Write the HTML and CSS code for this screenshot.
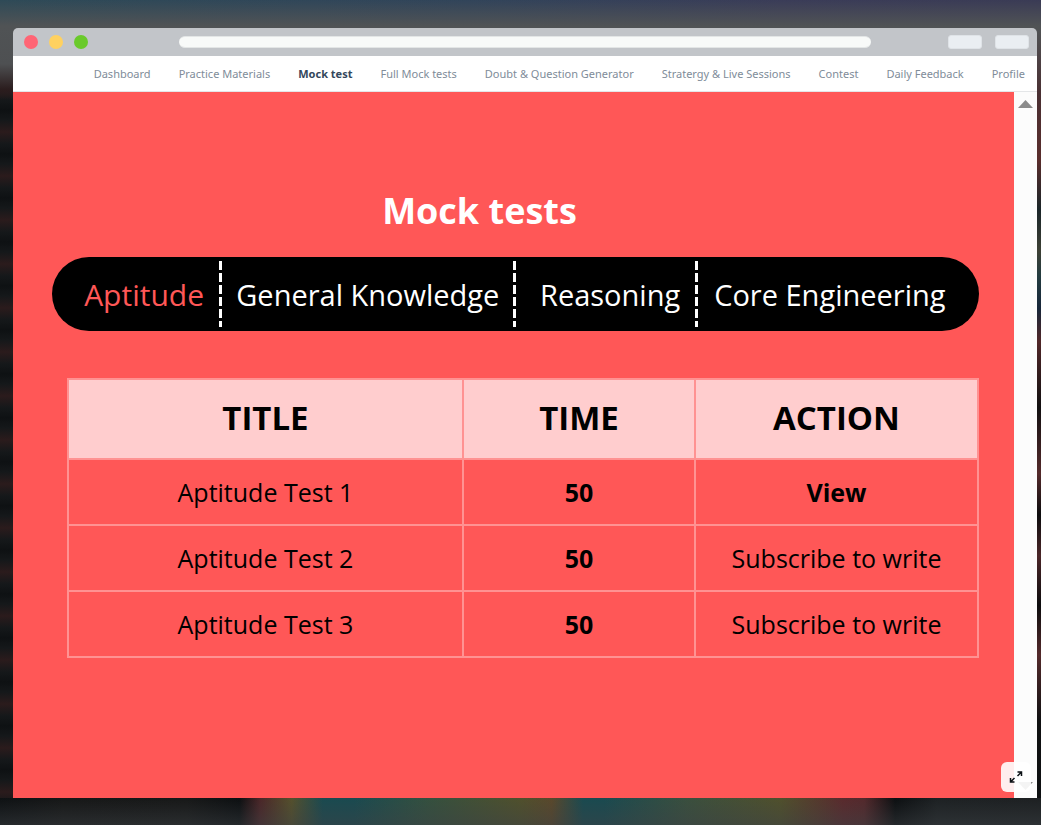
FILE: index.html
```html
<!DOCTYPE html>
<html lang="en">
<head>
<meta charset="utf-8">
<title>Mock tests</title>
<link rel="stylesheet" href="styles.css">
</head>
<body>
<div class="window">
  <header class="titlebar">
    <div class="lights"><span class="light red"></span><span class="light yellow"></span><span class="light green"></span></div>
    <div class="address"></div>
    <div class="chips"><span class="chip"></span><span class="chip"></span></div>
  </header>
  <nav class="nav">
    <a href="#">Dashboard</a>
    <a href="#">Practice Materials</a>
    <a href="#" class="current" aria-current="page">Mock test</a>
    <a href="#">Full Mock tests</a>
    <a href="#">Doubt &amp; Question Generator</a>
    <a href="#">Stratergy &amp; Live Sessions</a>
    <a href="#">Contest</a>
    <a href="#">Daily Feedback</a>
    <a href="#">Profile</a>
  </nav>
  <div class="body">
    <main class="content">
      <h1 class="title">Mock tests</h1>
      <div class="tabs">
        <button class="tab active" type="button">Aptitude</button>
        <button class="tab" type="button">General Knowledge</button>
        <button class="tab third" type="button">Reasoning</button>
        <button class="tab" type="button">Core Engineering</button>
      </div>
      <table class="tests">
        <colgroup><col class="col-title"><col class="col-time"><col class="col-action"></colgroup>
        <thead><tr><th>TITLE</th><th>TIME</th><th>ACTION</th></tr></thead>
        <tbody>
          <tr><td>Aptitude Test 1</td><td class="strong">50</td><td class="strong"><a href="#">View</a></td></tr>
          <tr><td>Aptitude Test 2</td><td class="strong">50</td><td><a href="#">Subscribe to write</a></td></tr>
          <tr><td>Aptitude Test 3</td><td class="strong">50</td><td><a href="#">Subscribe to write</a></td></tr>
        </tbody>
      </table>
    </main>
    <div class="scrollbar">
      <svg class="arrow" width="15" height="8" viewBox="0 0 15 8"><path d="M7.5 0 15 8H0z" fill="#8b8b8b"/></svg>
      <svg class="arrow" width="15" height="8" viewBox="0 0 15 8"><path d="M0 0H15L7.5 8z" fill="#8b8b8b"/></svg>
    </div>
    <button class="expand" type="button" aria-label="Expand">
      <svg width="14" height="14" viewBox="0 0 14 14" fill="none" stroke="#0d1216" stroke-width="1.5"><path d="M8.500 2h4v4M12.500 2 8.500 6M1.500 8v4h4M1.500 12l4-4"/></svg>
    </button>
  </div>
</div>
</body>
</html>
```
FILE: styles.css
```css
* { box-sizing: border-box; }
body {
  margin: 0;
  min-height: 100vh;
  padding: 28px 4px 27px 13px;
  display: flex;
  font-family: "Open Sans", "Noto Sans", sans-serif;
  background:
    linear-gradient(#505355, #4e5052 50%, #2b1d1e 85%, transparent) left 28px / 20px 72px no-repeat,
    linear-gradient(180deg, rgba(80, 83, 85, 0) 0, #505355 26px) left top / 100% 28px no-repeat,
    linear-gradient(90deg, #2e4a57, #31445a 45%, #3a3c58 75%, #3a3b55) left top / 100% 28px no-repeat,
    linear-gradient(rgba(60, 65, 69, 0), rgba(60, 65, 69, .5)) left bottom / 100% 27px no-repeat,
    linear-gradient(90deg, #0e1113 0, #161717 6%, #171818 18%, #0c0f11 23%, #4b2628 25%, #55502c 28%, #1a4a50 31%, #1a4a50 34%, #34503f 41%, #50502c 50%, #5a482b 53%, #1a4a50 56%, #1a4a50 58%, #3a4f3e 66%, #50502c 75%, #5a2a2d 81%, #54292c 83%, #0c0f11 86%, #1d2123 90%, #1d2022 100%) left bottom / 100% 27px no-repeat,
    linear-gradient(#505355 0, #4a3033 8%, #5a2d2c 16%, #1b2629 22%, #3d4035 27%, #243c40 30%, #18273a 34%, #512729 38%, #121011 46%, #542a2b 54%, #0d0d0e 59%, #4b2628 64%, #0d0d0e 70%, #542a2b 76%, #101112 84%, #0c0f11 100%) right 28px / 10px 100% no-repeat,
    repeating-linear-gradient(#2b1b1c 0, #15181a 12px, #0e1113 22px, #15181a 32px, #2b1b1c 44px);
}
a { color: inherit; text-decoration: none; }
button { border: 0; padding: 0; font: inherit; cursor: pointer; }

.window {
  flex: 1;
  min-width: 0;
  display: flex;
  flex-direction: column;
  border-radius: 5px 5px 0 0;
  overflow: hidden;
}
.titlebar {
  height: 28px;
  padding: 0 8px 0 11px;
  display: flex;
  align-items: center;
  background: #c2c5c9;
}
.lights { display: flex; gap: 11px; margin-right: 91px; }
.light { width: 14px; height: 14px; border-radius: 50%; }
.red { background: #ff6575; }
.yellow { background: #ffd160; }
.green { background: #6aca2b; }
.address { flex: 1; height: 12px; border: 1px solid #e3e6e6; border-width: 1px 0; border-radius: 6px; background: #f8faf9; }
.chips { display: flex; gap: 13px; margin-left: 77px; }
.chip { width: 34px; height: 14px; border: 1px solid #dfe3e7; border-radius: 3px; background: #eaeef2; }

.nav {
  height: 36px;
  padding: 0 12px;
  display: flex;
  justify-content: flex-end;
  align-items: center;
  gap: 28px;
  background: #fff;
  border-bottom: 1px solid #e4e6e8;
  font-family: "Noto Sans", "Open Sans", sans-serif;
  font-size: 11px;
  white-space: nowrap;
  color: #808c99;
}
.current { font-weight: 700; color: #33475b; }

.body { flex: 1; display: flex; position: relative; background: #ff5757; }
.content { flex: 1; min-width: 0; padding: 93px 35px 0 39px; }
.title {
  margin: 0;
  padding-right: 72px;
  text-align: center;
  font-size: 36px;
  line-height: 52px;
  color: #fff;
}
.tabs {
  margin-top: 20px;
  height: 74px;
  padding: 0 17px;
  display: grid;
  grid-template-columns: 150fr 294fr 181fr 267fr;
  align-items: center;
  background: #000;
  border-radius: 37px;
}
.tab {
  height: 66px;
  background: transparent;
  color: #fff;
  font-size: 29px;
  white-space: nowrap;
}
.tab + .tab {
  padding-left: 3px;
  background: repeating-linear-gradient(#fff 0 9px, transparent 9px 12px) left / 3px 100% no-repeat;
}
.tab.third { padding-left: 12px; }
.tab.active { font-size: 30px; color: #ff5757; }

.tests {
  width: calc(100% - 15px);
  margin: 47px 0 0 15px;
  table-layout: fixed;
  border-collapse: collapse;
  text-align: center;
  font-size: 25px;
  color: #000;
}
.col-title { width: 43.4%; }
.col-time { width: 25.5%; }
.col-action { width: 31.1%; }
.tests th, .tests td { border: 2px solid #ff9292; padding: 0; }
.tests th { height: 80px; padding-bottom: 3px; font-size: 33px; background: #ffcdce; }
.tests td { height: 66px; padding-bottom: 1px; }
.tests .strong { font-weight: 700; }

.scrollbar {
  width: 23px;
  padding: 8px 0;
  display: flex;
  flex-direction: column;
  justify-content: space-between;
  align-items: center;
  background: #fcfcfc;
}
.expand {
  position: absolute;
  right: 6px;
  bottom: 6px;
  width: 30px;
  height: 30px;
  display: grid;
  place-items: center;
  border-radius: 6px;
  background: rgba(255, 255, 255, .9);
}
```
